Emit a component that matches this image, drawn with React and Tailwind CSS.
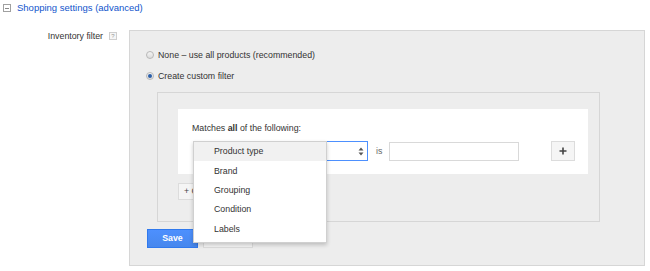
import React from "react";

function Radio({ checked }) {
  return (
    <div className="w-[8px] h-[8px] rounded-full border border-[#b8b8b8] bg-gradient-to-b from-[#f4f4f4] to-[#dcdcdc] flex items-center justify-center shrink-0">
      {checked && <div className="w-[4px] h-[4px] rounded-full bg-[#2a5ea8]" />}
    </div>
  );
}

export default function App() {
  const items = ["Product type", "Brand", "Grouping", "Condition", "Labels"];
  return (
    <div className="relative w-[650px] h-[271px] bg-white overflow-hidden font-['Liberation_Sans',Arial,sans-serif] text-[8.8px] text-[#333]">
      {/* header */}
      <div className="flex items-center h-[16px] pl-[3px]">
        <div className="w-[8px] h-[8px] border border-[#a0a0a0] bg-white flex items-center justify-center">
          <div className="w-[4px] h-px bg-[#888]" />
        </div>
        <span className="ml-[6px] text-[9.5px] text-[#1155cc] leading-[12px]">Shopping settings (advanced)</span>
      </div>

      {/* main row */}
      <div className="flex mt-[14px]">
        <div className="w-[129px] flex justify-end items-center self-start h-[10px] mt-[1px] pr-[12px] gap-[6px]">
          <span className="leading-[10px] text-[#333]">Inventory filter</span>
          <div className="w-[8px] h-[8px] border border-[#cfcfcf] bg-[#f6f6f6] flex items-center justify-center text-[6px] leading-none text-[#999]">?</div>
        </div>

        <div className="w-[516px] h-[236px] border border-[#d6d6d6] bg-[#ededed] flex flex-col">
          <div className="flex items-center gap-[4px] pl-[16px] mt-[18px] h-[12px]">
            <Radio />
            <span className="leading-[12px]">None – use all products (recommended)</span>
          </div>
          <div className="flex items-center gap-[4px] pl-[16px] mt-[9px] h-[12px]">
            <Radio checked />
            <span className="leading-[12px]">Create custom filter</span>
          </div>

          {/* inner panel */}
          <div className="ml-[27px] mt-[10px] w-[443px] h-[130px] border border-[#d6d6d6] bg-[#ededed] pl-[20px] pt-[16px] flex flex-col">
            <div className="w-[410px] h-[65px] bg-white pl-[14px] pt-[14px] flex flex-col">
              <div className="leading-[10px] text-[#333]">
                Matches <b className="font-bold">all</b> of the following:
              </div>
              <div className="flex items-center mt-[8px]">
                <div className="ml-[1px] w-[175px] h-[20px] border border-[#4d90fe] bg-white flex items-center justify-end pr-[3px]">
                  <svg width="6" height="9" viewBox="0 0 6 9">
                    <path d="M0.5 3.5 L3 0.5 L5.5 3.5 Z" fill="#555" />
                    <path d="M0.5 5.5 L3 8.5 L5.5 5.5 Z" fill="#555" />
                  </svg>
                </div>
                <span className="ml-[8px] text-[#666] leading-[10px]">is</span>
                <div className="ml-[7px] w-[130px] h-[19px] border border-[#d9d9d9] bg-white" />
                <div className="ml-[32px] w-[24px] h-[20px] border border-[#dcdcdc] bg-[#f5f5f5] flex items-center justify-center">
                  <svg width="8" height="8" viewBox="0 0 8 8">
                    <path d="M4 0.5 V7.5 M0.5 4 H7.5" stroke="#444" strokeWidth="1.6" />
                  </svg>
                </div>
              </div>
            </div>
            <div className="mt-[9px] self-start h-[17px] border border-[#dcdcdc] bg-[#f5f5f5] px-[5px] flex items-center text-[#444] leading-none">
              + Create new condition
            </div>
          </div>

          {/* buttons */}
          <div className="flex mt-[7px] ml-[17px] gap-[5px]">
            <div className="w-[51px] h-[19px] border border-[#3079ed] bg-gradient-to-b from-[#4d90fe] to-[#4787ed] text-white font-bold flex items-center justify-center leading-none">
              Save
            </div>
            <div className="w-[50px] h-[19px] border border-[#dcdcdc] bg-[#f5f5f5] text-[#444] font-bold flex items-center justify-center leading-none">
              Cancel
            </div>
          </div>
        </div>
      </div>

      {/* dropdown */}
      <div className="absolute left-[193px] top-[141px] w-[134px] h-[102px] bg-white border border-[#d0d0d0] shadow-[0_2px_4px_rgba(0,0,0,0.2)] pb-[5px]">
        {items.map((t, i) => (
          <div
            key={t}
            className={
              i === 0
                ? "h-[19.4px] flex items-center pl-[20px] bg-[#f1f1f1] text-[#333] leading-none"
                : "h-[19.4px] flex items-center pl-[20px] text-[#333] leading-none"
            }
          >
            {t}
          </div>
        ))}
      </div>
    </div>
  );
}
